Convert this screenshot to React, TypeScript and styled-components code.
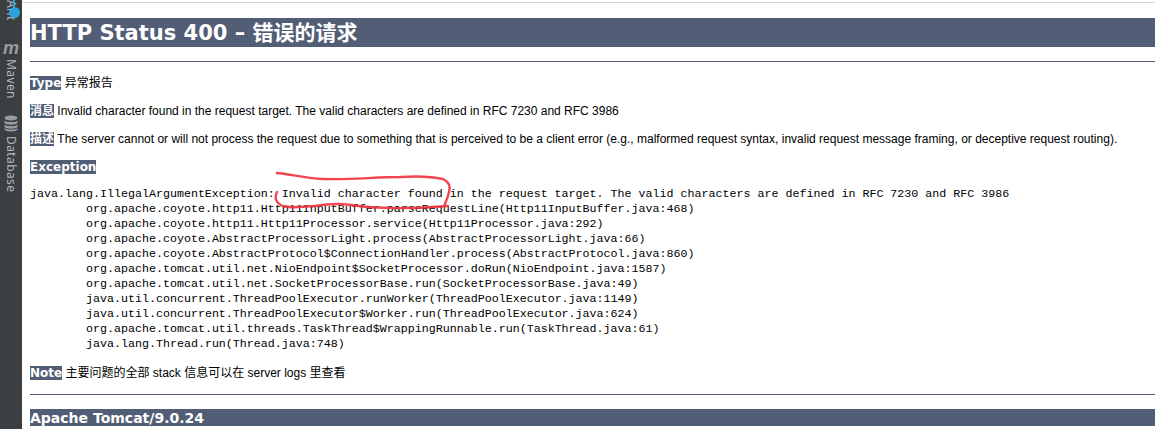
import React from "react";
import styled, { createGlobalStyle } from "styled-components";

const GlobalStyle = createGlobalStyle`
  html, body {
    margin: 0;
    padding: 0;
    background: #fff;
    overflow: hidden;
  }
`;

const Page = styled.div`
  position: relative;
  display: flex;
  width: 1155px;
  height: 429px;
  overflow: hidden;
`;

const Sidebar = styled.aside`
  position: relative;
  flex: 0 0 22px;
  display: flex;
  flex-direction: column;
  align-items: center;
  background: #3c3f41;
  color: #b4b8bb;
  font-family: "Noto Sans", sans-serif;
  font-size: 12px;
  overflow: hidden;
`;

const ToolLabel = styled.span<{ $top: number }>`
  writing-mode: vertical-rl;
  line-height: 16px;
  margin-top: ${(p) => p.$top}px;
  letter-spacing: 0.4px;
`;

const MavenGlyph = styled.span`
  margin-top: 20px;
  font: italic 700 18px/14px "Liberation Sans", sans-serif;
  color: #9a9da0;
`;

const Badge = styled.span`
  position: absolute;
  top: 7px;
  left: 9px;
  width: 11px;
  height: 11px;
  border-radius: 50%;
  background: #29a3dc;
  &::before {
    content: "";
    position: absolute;
    left: 4px;
    top: -7px;
    width: 2px;
    height: 8px;
    background: #29a3dc;
  }
`;

const DbIcon = styled.svg`
  margin-top: 16px;
  display: block;
`;

const Content = styled.main`
  flex: 1;
  min-width: 0;
  padding: 2px 0 0 0;
  color: #000;
  font-family: "DejaVu Sans", "Noto Sans CJK SC", sans-serif;
  font-size: 12px;
`;

const TopRule = styled.div`
  height: 1px;
  background: #d4d4d4;
  margin-bottom: 15px;
`;

const Inner = styled.div`
  padding-left: 8px;
`;

const Heading = styled.h1`
  margin: 0;
  height: 29px;
  line-height: 30px;
  background: #525d76;
  color: #fff;
  font-family: "DejaVu Sans", "Noto Sans CJK SC", sans-serif;
  font-size: 21px;
  font-weight: 700;
  white-space: nowrap;
`;

const Rule = styled.hr<{ $mt: number; $mb: number }>`
  margin: ${(p) => p.$mt}px 0 ${(p) => p.$mb}px;
  border: 0;
  height: 1px;
  background: #525d76;
`;

const Line = styled.p<{ $h?: number }>`
  margin: 0;
  height: ${(p) => p.$h ?? 28}px;
  line-height: 16px;
  white-space: nowrap;
  font-family: "Liberation Sans", "Noto Sans CJK SC", sans-serif;
`;

const Tag = styled.b`
  background: #525d76;
  color: #fff;
  font-family: "DejaVu Sans", "Noto Sans CJK SC", sans-serif;
  font-size: 12px;
`;

const Trace = styled.pre`
  margin: 0 0 13px;
  font-family: "Liberation Mono", monospace;
  font-size: 11.67px;
  line-height: 15px;
  tab-size: 8;
`;

const Footer = styled.h3`
  margin: 0;
  height: 17px;
  line-height: 18px;
  background: #525d76;
  color: #fff;
  font-family: "DejaVu Sans", sans-serif;
  font-size: 14px;
  font-weight: 700;
`;

const Scribble = styled.svg`
  position: absolute;
  left: 265px;
  top: 165px;
  pointer-events: none;
`;

const trace = `java.lang.IllegalArgumentException: Invalid character found in the request target. The valid characters are defined in RFC 7230 and RFC 3986
\torg.apache.coyote.http11.Http11InputBuffer.parseRequestLine(Http11InputBuffer.java:468)
\torg.apache.coyote.http11.Http11Processor.service(Http11Processor.java:292)
\torg.apache.coyote.AbstractProcessorLight.process(AbstractProcessorLight.java:66)
\torg.apache.coyote.AbstractProtocol$ConnectionHandler.process(AbstractProtocol.java:860)
\torg.apache.tomcat.util.net.NioEndpoint$SocketProcessor.doRun(NioEndpoint.java:1587)
\torg.apache.tomcat.util.net.SocketProcessorBase.run(SocketProcessorBase.java:49)
\tjava.util.concurrent.ThreadPoolExecutor.runWorker(ThreadPoolExecutor.java:1149)
\tjava.util.concurrent.ThreadPoolExecutor$Worker.run(ThreadPoolExecutor.java:624)
\torg.apache.tomcat.util.threads.TaskThread$WrappingRunnable.run(TaskThread.java:61)
\tjava.lang.Thread.run(Thread.java:748)`;

const App = (): JSX.Element => {
  return (
    <Page>
      <GlobalStyle />
      <Sidebar>
        <ToolLabel $top={0}>Ant</ToolLabel>
        <Badge />
        <MavenGlyph>m</MavenGlyph>
        <ToolLabel $top={4}>Maven</ToolLabel>
        <DbIcon width="14" height="17" viewBox="0 0 14 17">
          <ellipse cx="7" cy="3" rx="6.5" ry="2.6" fill="#9a9da0" />
          <path d="M.5 5.5c1 2 12 2 13 0v2.5c-1 2.2-12 2.2-13 0z" fill="#9a9da0" />
          <path d="M.5 9.5c1 2 12 2 13 0v2.5c-1 2.2-12 2.2-13 0z" fill="#9a9da0" />
          <path d="M.5 13c1 2 12 2 13 0v1.5c-1 2.6-12 2.6-13 0z" fill="#9a9da0" />
        </DbIcon>
        <ToolLabel $top={4}>Database</ToolLabel>
      </Sidebar>
      <Content>
        <TopRule />
        <Inner>
          <Heading>HTTP Status 400 – 错误的请求</Heading>
          <Rule $mt={14} $mb={13} />
          <Line><Tag>Type</Tag> 异常报告</Line>
          <Line><Tag>消息</Tag> Invalid character found in the request target. The valid characters are defined in RFC 7230 and RFC 3986</Line>
          <Line><Tag>描述</Tag> The server cannot or will not process the request due to something that is perceived to be a client error (e.g., malformed request syntax, invalid request message framing, or deceptive request routing).</Line>
          <Line $h={28}><Tag>Exception</Tag></Line>
          <Trace>{trace}</Trace>
          <Line $h={29}><Tag>Note</Tag> 主要问题的全部 stack 信息可以在 server logs 里查看</Line>
          <Rule $mt={0} $mb={14} />
          <Footer>Apache Tomcat/9.0.24</Footer>
        </Inner>
      </Content>
      <Scribble width="200" height="50" viewBox="0 0 200 50" fill="none">
        <path
          d="M12 8 C25 9 38 13 58 14 C85 15 110 12 135 12 C150 11 165 11 178 14 C184 17 186 21 184 27 C183 32 181 37 179 41 M12 27 C9 33 11 38 18 41 C28 44 38 41 50 41 C62 39 72 38 86 40 C110 44 150 44 183 41"
          stroke="#f0323c"
          strokeWidth="2.4"
          strokeLinecap="round"
          opacity="0.9"
        />
      </Scribble>
    </Page>
  );
};

export default App;
